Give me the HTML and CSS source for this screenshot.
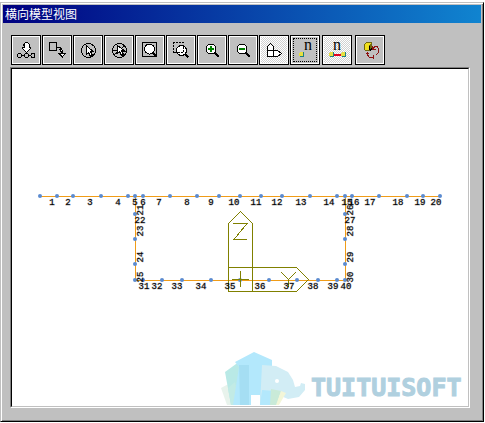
FILE: index.html
```html
<!DOCTYPE html>
<html lang="zh-CN">
<head>
<meta charset="utf-8">
<meta name="viewport" content="width=device-width, initial-scale=1">
<title>横向模型视图</title>
<link rel="stylesheet" href="styles.css">
</head>
<body>
<main class="window">
  <h1 class="titlebar">横向模型视图</h1>
  <div class="content">
    <div class="toolbar" role="toolbar" aria-label="视图工具">
      <button class="tool" aria-label="选择节点"><svg viewBox="0 0 26 26"><path class="ink white" d="M10.5 7.5l2-2h2l2 2v3h1v1l-4 4-4-4v-1h2v-3l-1 1z"/><path class="ink" d="M8 18.5h3M15 18.5h3"/><g class="ink"><circle cx="6.500" cy="18.500" r="2"/><circle cx="13.500" cy="18.500" r="2"/><circle cx="20" cy="18.500" r="2"/></g></svg></button>
      <button class="tool" aria-label="选择单元"><svg viewBox="0 0 26 26"><path class="ink" d="M5.500 5.500h7v8h-7zM13 10.500h3l2 2"/><path class="ink white" d="M15.500 12.500h2l1 1v3h2.500l-2.500 3.500-3.500-3.500h2v-2z"/></svg></button>
      <button class="tool" aria-label="单选"><svg viewBox="0 0 26 26"><circle class="ink" cx="13.500" cy="13.500" r="7"/><path class="ink white" d="M11.500 8.500v9l2-2 2 4 2-1-2-4h2.500z"/></svg></button>
      <button class="tool" aria-label="多选"><svg viewBox="0 0 26 26"><circle class="ink" cx="13.500" cy="13.500" r="7"/><path class="ink" d="M7 13.500h4M14 12l5-3M8 18l4-3M17 14h3"/><path class="ink white" d="M11.500 8.500v8l2-2 2 4 2-1-2-4h2.500z"/></svg></button>
      <button class="tool" aria-label="全部显示"><svg viewBox="0 0 26 26"><path class="ink" d="M5.500 5.500h14v14h-14z"/><circle class="ink white" cx="12.500" cy="12" r="5"/><path class="handle" d="M16 16l4 4"/></svg></button>
      <button class="tool" aria-label="窗口缩放"><svg viewBox="0 0 26 26"><path class="ink dashed" d="M5.500 15.500v-10h10"/><path class="ink dashed" d="M5.500 15.500h4"/><circle class="ink white" cx="13.500" cy="13.500" r="5"/><path class="ink dashed" d="M15.500 10v5.500H10"/><path class="handle" d="M17 17l3.500 3.500"/></svg></button>
      <button class="tool" aria-label="放大"><svg viewBox="0 0 26 26"><circle class="ink white" cx="12" cy="12" r="5"/><path class="green" d="M9 12h6M12 9v6"/><path class="handle" d="M16 16l4 4"/></svg></button>
      <button class="tool" aria-label="缩小"><svg viewBox="0 0 26 26"><circle class="ink white" cx="12" cy="12" r="5"/><path class="green" d="M9 12h6"/><path class="handle" d="M16 16l4 4"/></svg></button>
      <button class="tool tool-on" aria-label="坐标系"><svg viewBox="0 0 26 26"><path class="ink white" d="M6.500 19.500v-10l3-3 3 3v4h4l4 3-4 3zM6.500 13.500h6v6"/></svg></button>
      <button class="tool tool-focus" aria-label="节点号"><svg viewBox="0 0 26 26"><text class="n" x="12" y="13">n</text><path class="teal" d="M8 15h3l1 1v3l-1 1H8l-1-1v-3z"/><path class="yellow" d="M8 15h3v3l-1 1H7v-3z"/></svg></button>
      <button class="tool tool-on tool-gap" aria-label="单元号"><svg viewBox="0 0 26 26"><text class="n" x="9" y="13">n</text><path class="red" d="M9 18h9"/><path class="teal" d="M6 15h3l1 1v3l-1 1H6l-1-1v-3zM18 15h3l1 1v3l-1 1h-3l-1-1v-3z"/><path class="yellow" d="M6 15h3v3l-1 1H5v-3zM18 15h3v3l-1 1h-3v-3z"/></svg></button>
      <button class="tool tool-last" aria-label="旋转模型"><svg viewBox="0 0 26 26"><path class="cube-side" d="M7 7l3-2h4l1 1v6l-3 2h-4l-1-1z"/><path class="cube" d="M8 7l2-1h4l-2 2v5H8z"/><path class="ink" d="M12.500 9v4M13 13.500l2-2"/><path class="dark-red" d="M15.500 13v-4M15 12.500h4M16 11.500l2-2h2l1.500 2v4l-3 3M10.500 15v3l2 2.500h4M9 16.500h3M16.500 18v4"/></svg></button>
    </div>
    <div class="frame">
      <svg class="view" viewBox="12 69 456 337" role="img" aria-label="横向模型">
        <g class="brand">
          <path fill="#e8f3ec" d="M221 388l13-7 3 24h-10z"/>
          <path fill="#b9e9e6" d="M225 372l11-8 13 1v40h-18z"/>
          <path fill="#c2ebe5" d="M228 388l7-6 5 23h-9z"/>
          <path fill="#b3e8fc" d="M235 362l19-10 18 8v45h-12v-10h-9v10h-18l6-38z"/>
          <path fill="#a5def3" d="M239 365h10v40h-9z"/>
          <path fill="#d2edf5" d="M262 365l14 1 12 6 5 8 2 7 5-1 1-3 4 1v6l-6 7-11 2-7-3-6-5-13-1-2 15z"/>
          <path fill="#c9ead8" d="M271 389l10 2-4 14h-7z"/>
          <path fill="#f3f6d8" d="M281 391l5 2-7 12h-3z"/>
          <path fill="#fff" d="M252 395h8v10h-8z"/>
          <circle cx="277" cy="381" r="2" fill="#fff"/>
          <text x="311" y="396">TUITUISOFT</text>
        </g>
        <g class="beam"><path d="M40 196.500h400M135.500 196v84.500h210V196"/></g>
        <g id="nodes" class="node"></g>
        <g class="axes">
          <path d="M228.500 291.500v-68l12-12 12 12v68M228.500 267.500h68l12 12-12 12h-68M232 279.500h17M240.500 271v16M233 223.500h14l-13 16h13M281 272l7.500 7.500 7.500-7.500M288.500 279v8"/>
        </g>
        <g id="labels" class="labels"></g>
      </svg>
    </div>
  </div>
</main>
<script src="model.js"></script>
</body>
</html>
```
FILE: styles.css
```css
* { box-sizing: border-box; }

body {
  margin: 0;
  padding: 2px 1px 1px 0;
  background: #fff;
  font-family: "Liberation Sans", "Noto Sans CJK SC", sans-serif;
}

.window {
  padding: 2px;
  background: #c0c0c0;
  border: 1px solid;
  border-color: #c0c0c0 #000 #000 #c0c0c0;
  box-shadow: inset 1px 1px #fff, inset -1px -1px #808080;
}

.titlebar {
  margin: 0;
  padding: 0 2px;
  height: 18px;
  line-height: 20px;
  font-size: 12px;
  font-weight: 400;
  color: #fff;
  background: linear-gradient(90deg, #000080, #1084d0);
}

.content { padding: 12px 11px 11px 7px; }

.toolbar {
  display: flex;
  gap: 1px;
  padding: 0 1px 2px;
}

.tool {
  width: 30px;
  height: 30px;
  padding: 0;
  border: 1px solid #000;
  border-radius: 0;
  background: #c0c0c0;
  box-shadow: inset 0 0 0 1px #fff;
}

.tool svg {
  display: block;
  width: 26px;
  height: 26px;
  margin: 1px;
  shape-rendering: crispEdges;
}

.tool-on {
  background: repeating-conic-gradient(#fff 0 25%, #d0d0d0 0 50%) 0 0 / 2px 2px;
}

.tool-focus { outline: 1px dotted #000; outline-offset: -4px; }
.tool-gap { margin-left: 1px; }
.tool-last { margin-left: 2px; }

.ink { fill: none; stroke: #000; stroke-width: 1; }
.white { fill: #fff; }
.dashed { stroke-dasharray: 2 1; }
.handle { fill: none; stroke: #000; stroke-width: 2; }
.green { fill: none; stroke: #008000; stroke-width: 2; }
.red { stroke: #e00020; stroke-width: 2; }
.dark-red { fill: none; stroke: #8c1010; stroke-width: 1; }
.teal { fill: #208080; }
.yellow { fill: #e8e040; }
.cube { fill: #f0e020; }
.cube-side { fill: #706810; }
.n { font: 400 16px "Liberation Serif", serif; }

.frame {
  border: 1px solid;
  border-color: #808080 #fff #fff #808080;
}

.view {
  display: block;
  width: 100%;
  height: auto;
  background: #fff;
  border: 1px solid;
  border-color: #000 #c0c0c0 #c0c0c0 #000;
}

.beam { fill: none; stroke: #f09c18; stroke-width: 1; shape-rendering: crispEdges; }
.node { fill: #5b8bd0; }
.axes { fill: none; stroke: #808000; stroke-width: 1; shape-rendering: crispEdges; }

.labels {
  font: 400 9px "Liberation Mono", monospace;
  fill: #000;
  stroke: #000;
  stroke-opacity: 0.3;
  text-anchor: middle;
}

.brand text {
  font: 700 25px "DejaVu Sans Mono", monospace;
  fill: #b0d0df;
  stroke: #b0d0df;
  stroke-width: 1;
}
```
FILE: model.js
```js
const SVG = "http://www.w3.org/2000/svg";

// Node positions along the deck, the two webs and the bottom slab.
const deck = [40, 57, 73, 101, 128, 135, 143, 170, 197, 219, 240, 261, 282, 310, 337, 345, 352, 379, 407, 423, 440];
const slab = [143, 162, 182, 211, 240, 269, 297, 318, 337];
const web = [214, 239, 264, 280];
const points = [
  ...deck.map(x => [x, 196]),
  ...slab.map(x => [x, 280]),
  ...web.flatMap(y => [[135, y], [345, y]])
];
const nodes = document.getElementById("nodes");
for (const [x, y] of points) {
  const dot = document.createElementNS(SVG, "circle");
  dot.setAttribute("cx", x);
  dot.setAttribute("cy", y);
  dot.setAttribute("r", 2);
  nodes.append(dot);
}

const labels = document.getElementById("labels");
function label(number, x, y, upright) {
  const text = document.createElementNS(SVG, "text");
  text.textContent = number;
  text.setAttribute("x", x);
  text.setAttribute("y", y);
  if (upright) text.setAttribute("transform", `rotate(-90 ${x} ${y})`);
  labels.append(text);
}

[52, 68, 90, 118, 135, 143, 159, 187, 211, 234, 256, 277, 301, 329, 347, 354, 370, 398, 420, 436]
  .forEach((x, i) => label(i + 1, x, 205));
[144, 157, 177, 201, 230, 260, 289, 313, 333, 346]
  .forEach((x, i) => label(i + 31, x, 289));
[[21, 210], [23, 231], [24, 257], [25, 277]].forEach(([n, y]) => label(n, 143, y, true));
[[26, 210], [28, 231], [29, 257], [30, 277]].forEach(([n, y]) => label(n, 353, y, true));
label(22, 140, 223);
label(27, 350, 223);
```
